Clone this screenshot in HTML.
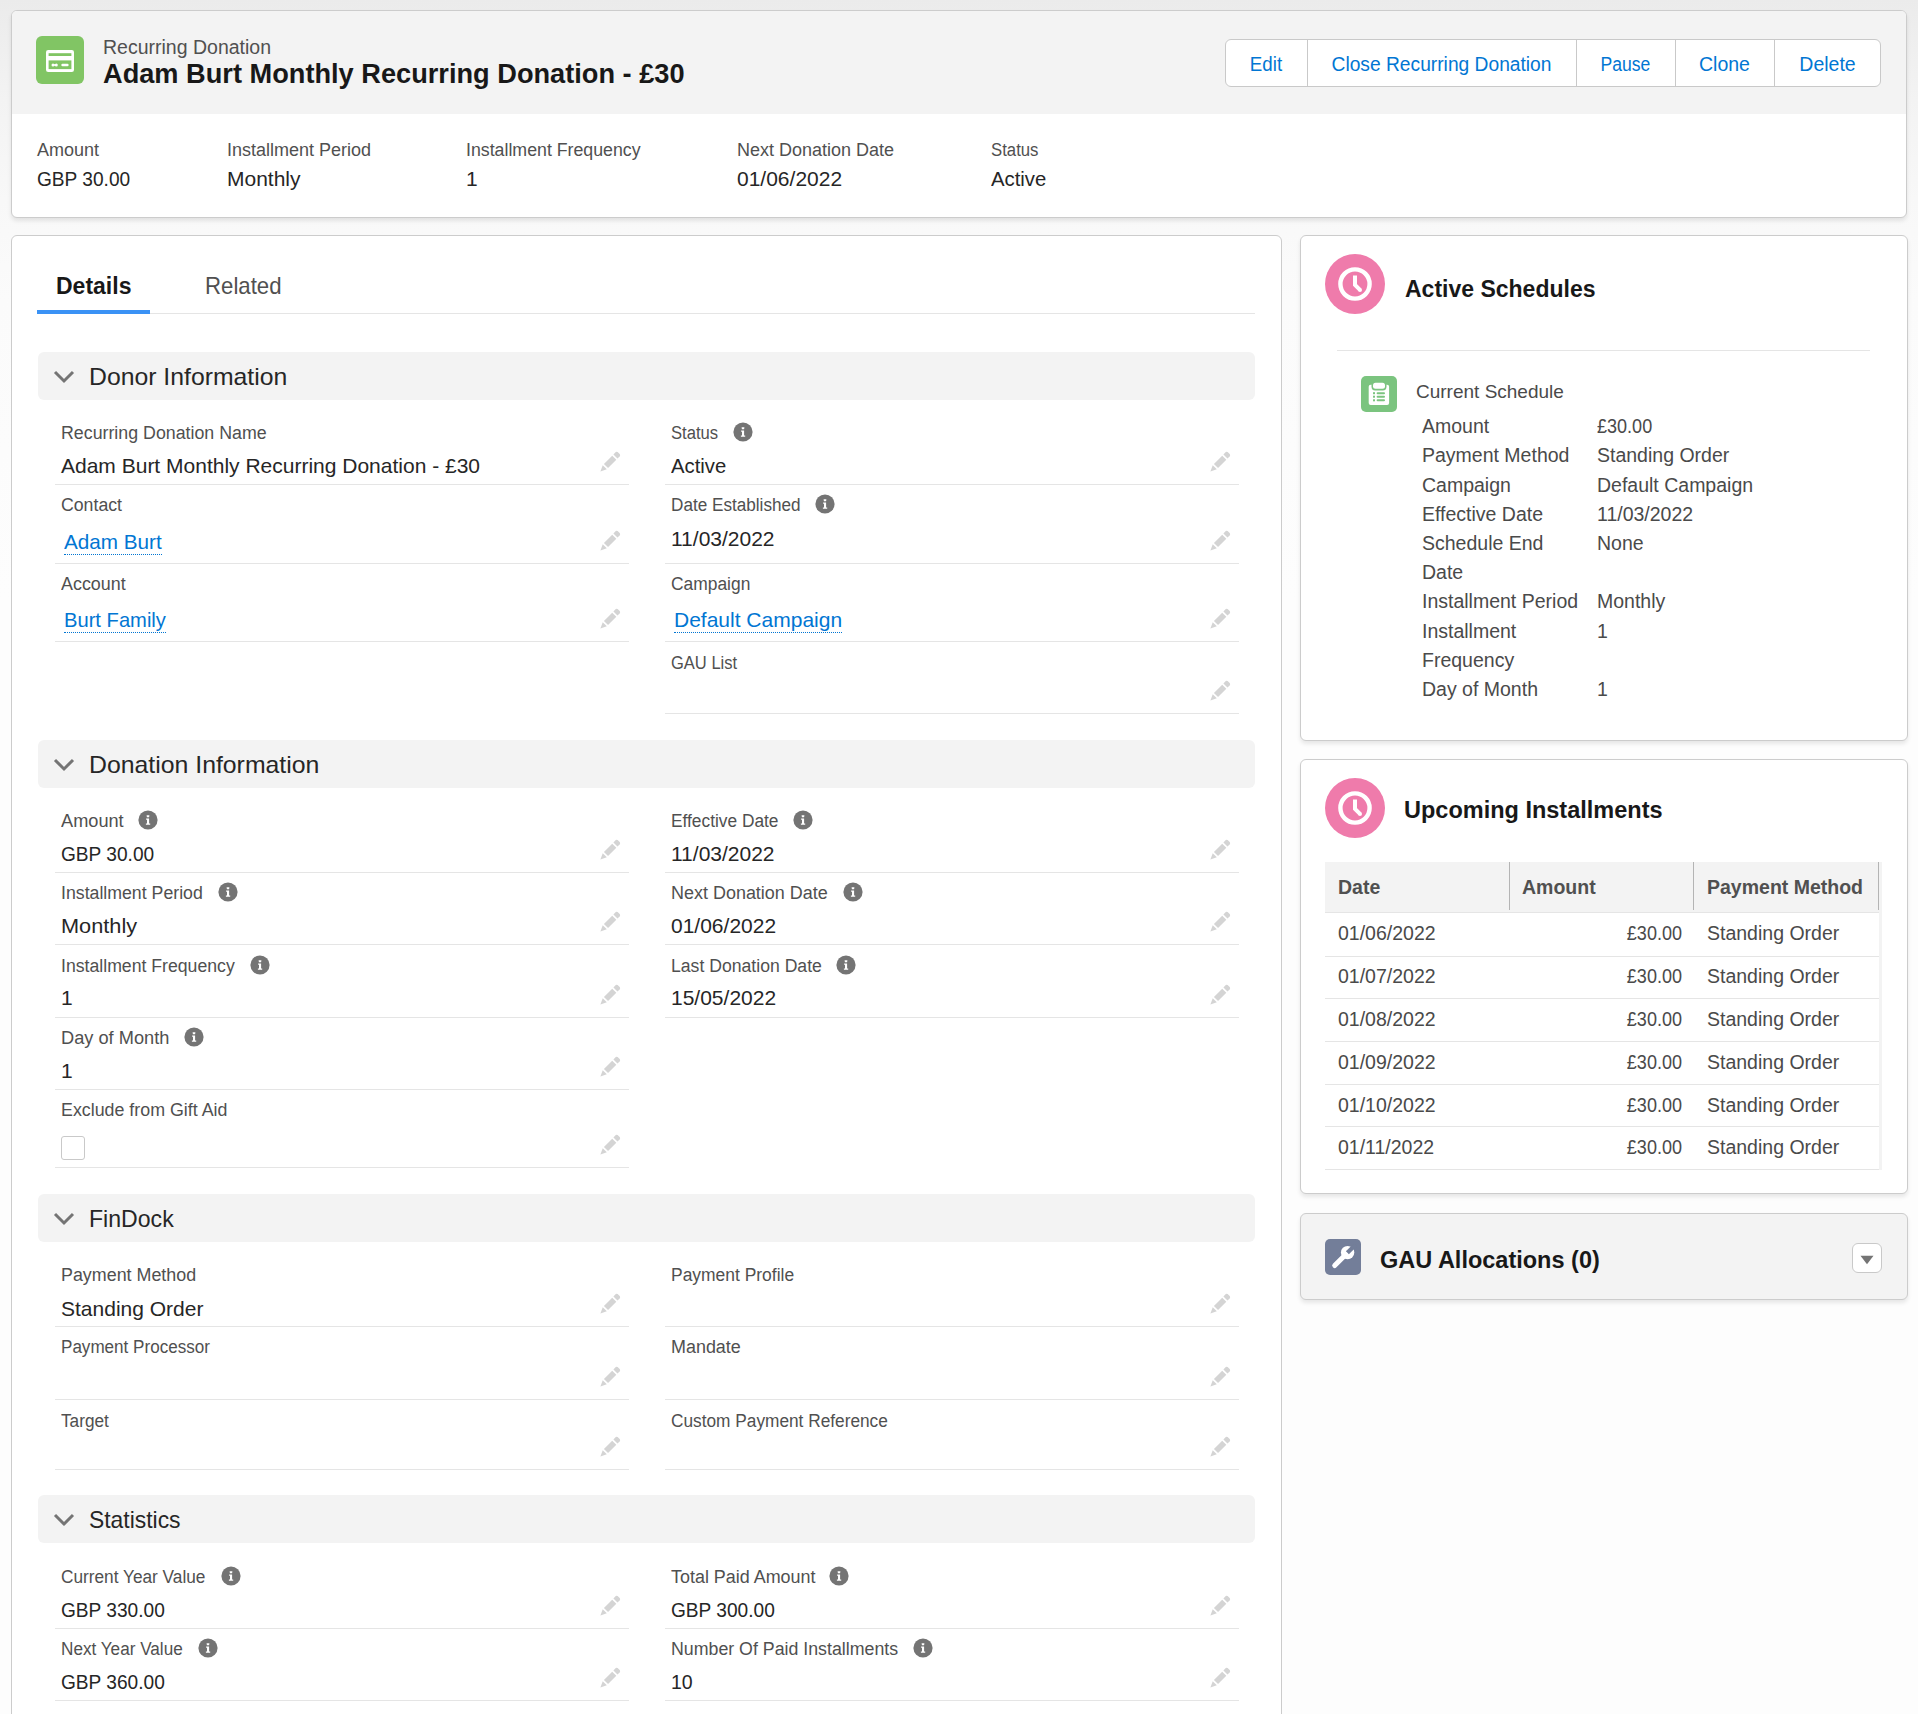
<!DOCTYPE html>
<html><head><meta charset="utf-8"><title>Recurring Donation</title>
<style>
html,body{margin:0;padding:0;width:1918px;height:1714px;overflow:hidden;background:#fafafa}
body{position:relative;font-family:"Liberation Sans", sans-serif}
.t{position:absolute;white-space:nowrap;font-family:"Liberation Sans", sans-serif}
.r{position:absolute;display:block}
.lnk{text-decoration:underline dotted;text-decoration-thickness:1.5px;text-underline-offset:5px}
</style></head><body>
<div class="r" style="left:0;top:0;width:1918px;height:1714px;background:linear-gradient(#ebebeb 0px,#f3f3f3 100px,#f8f8f8 200px,#fbfbfb 300px,#fdfdfd 600px,#fdfdfd 1714px)"></div>
<div class="r" style="left:11px;top:10px;width:1896px;height:208px;box-sizing:border-box;border:1px solid #cccccc;border-radius:6px;background:#fff;box-shadow:0 3px 4px rgba(0,0,0,0.09);overflow:hidden"></div>
<div class="r" style="left:12px;top:11px;width:1894px;height:103px;background:#f3f3f3;border-radius:5px 5px 0 0"></div>
<div class="r" style="left:36px;top:36px;width:48px;height:48px;background:#81c564;border-radius:6px"></div>
<svg class="r" style="left:36px;top:36px" width="48" height="48" viewBox="0 0 48 48"><rect x="10" y="14" width="28" height="22" rx="2.2" fill="#fff"/><rect x="12.6" y="17.2" width="22.8" height="2.8" fill="#81c564"/><rect x="12.6" y="24.4" width="22.8" height="8.7" fill="#81c564"/><circle cx="17" cy="29" r="1.5" fill="#fff"/><circle cx="20.3" cy="29" r="1.5" fill="#fff"/><rect x="17" y="28.2" width="3.3" height="1.6" fill="#fff"/><rect x="25.3" y="27.8" width="7.3" height="2.4" rx="1.2" fill="#fff"/></svg>
<div class="t" style="left:103px;top:38px;font-size:19.5px;line-height:19.5px;color:#505050;">Recurring Donation</div>
<div class="t" style="left:103px;top:61px;font-size:27px;line-height:27px;color:#181818;font-weight:700;transform:scaleX(1.007);transform-origin:0 0;">Adam Burt Monthly Recurring Donation - £30</div>
<div class="r" style="left:1225px;top:39px;width:656px;height:48px;box-sizing:border-box;border:1px solid #c9c9c9;border-radius:6px;background:#fff"></div>
<div class="t" style="left:1225px;width:82px;text-align:center;top:55px;font-size:19.5px;line-height:19.5px;color:#0176d3;transform:scaleX(0.96);transform-origin:50% 0">Edit</div>
<div class="r" style="left:1307px;top:40px;width:1px;height:46px;background:#c9c9c9"></div>
<div class="t" style="left:1307px;width:269px;text-align:center;top:55px;font-size:19.5px;line-height:19.5px;color:#0176d3;transform:scaleX(0.985);transform-origin:50% 0">Close Recurring Donation</div>
<div class="r" style="left:1576px;top:40px;width:1px;height:46px;background:#c9c9c9"></div>
<div class="t" style="left:1576px;width:99px;text-align:center;top:55px;font-size:19.5px;line-height:19.5px;color:#0176d3;transform:scaleX(0.9);transform-origin:50% 0">Pause</div>
<div class="r" style="left:1675px;top:40px;width:1px;height:46px;background:#c9c9c9"></div>
<div class="t" style="left:1675px;width:99px;text-align:center;top:55px;font-size:19.5px;line-height:19.5px;color:#0176d3;transform:scaleX(1);transform-origin:50% 0">Clone</div>
<div class="r" style="left:1774px;top:40px;width:1px;height:46px;background:#c9c9c9"></div>
<div class="t" style="left:1774px;width:107px;text-align:center;top:55px;font-size:19.5px;line-height:19.5px;color:#0176d3;transform:scaleX(1);transform-origin:50% 0">Delete</div>
<div class="t" style="left:37px;top:141px;font-size:18px;line-height:18px;color:#505050;">Amount</div>
<div class="t" style="left:37px;top:168px;font-size:21px;line-height:21px;color:#262626;transform:scaleX(0.91);transform-origin:0 0;">GBP 30.00</div>
<div class="t" style="left:227px;top:141px;font-size:18px;line-height:18px;color:#505050;">Installment Period</div>
<div class="t" style="left:227px;top:168px;font-size:21px;line-height:21px;color:#262626;">Monthly</div>
<div class="t" style="left:466px;top:141px;font-size:18px;line-height:18px;color:#505050;transform:scaleX(0.986);transform-origin:0 0;">Installment Frequency</div>
<div class="t" style="left:466px;top:168px;font-size:21px;line-height:21px;color:#262626;">1</div>
<div class="t" style="left:737px;top:141px;font-size:18px;line-height:18px;color:#505050;">Next Donation Date</div>
<div class="t" style="left:737px;top:168px;font-size:21px;line-height:21px;color:#262626;">01/06/2022</div>
<div class="t" style="left:991px;top:141px;font-size:18px;line-height:18px;color:#505050;transform:scaleX(0.93);transform-origin:0 0;">Status</div>
<div class="t" style="left:991px;top:168px;font-size:21px;line-height:21px;color:#262626;transform:scaleX(0.967);transform-origin:0 0;">Active</div>
<div class="r" style="left:11px;top:235px;width:1271px;height:1600px;box-sizing:border-box;border:1px solid #cccccc;border-radius:6px;background:#fff"></div>
<div class="t" style="left:56px;top:275px;font-size:23px;line-height:23px;color:#181818;font-weight:700;">Details</div>
<div class="t" style="left:205px;top:274px;font-size:24px;line-height:24px;color:#505050;transform:scaleX(0.925);transform-origin:0 0;">Related</div>
<div class="r" style="left:37px;top:313px;width:1218px;height:1px;background:#e5e5e5"></div>
<div class="r" style="left:37px;top:310px;width:113px;height:4px;background:#3a92f5"></div>
<div class="r" style="left:38px;top:352px;width:1217px;height:48px;background:#f3f3f3;border-radius:6px"></div>
<svg class="r" style="left:53px;top:370px" width="22" height="14" viewBox="0 0 22 14"><path d="M2 2l9 9 9-9" fill="none" stroke="#747474" stroke-width="3"/></svg>
<div class="t" style="left:89px;top:365px;font-size:24px;line-height:24px;color:#262626;transform:scaleX(1.032);transform-origin:0 0;">Donor Information</div>
<div class="t" style="left:61px;top:424px;font-size:18px;line-height:18px;color:#505050;transform:scaleX(0.988);transform-origin:0 0">Recurring Donation Name</div>
<div class="t" style="left:61px;top:455px;font-size:21px;line-height:21px;color:#262626;">Adam Burt Monthly Recurring Donation - £30</div>
<div class="r" style="left:55px;top:484px;width:574px;height:1px;background:#e5e5e5"></div>
<svg class="r" style="left:600px;top:451px" width="21" height="21" viewBox="0 0 21 21"><path d="M0.40 20.60L2.73 14.17L6.83 18.27Z M3.94 12.96L12.21 4.69L16.31 8.79L8.04 17.06Z M13.41 3.49L16.03 0.87L17.65 1.08L19.92 3.35L20.13 4.97L17.51 7.59Z" fill="#d4d4d4"/></svg>
<div class="t" style="left:671px;top:424px;font-size:18px;line-height:18px;color:#505050;transform:scaleX(0.924);transform-origin:0 0">Status</div>
<svg class="r" style="left:732.5px;top:422.4px" width="20" height="20" viewBox="0 0 20 20"><circle cx="10" cy="10" r="9.6" fill="#747474"/><path d="M8.6 5.2h2.8l-.3 2h-2.2z" fill="#fff"/><path d="M8.1 8.4h3v5.1h1.1v1.3H7.9v-1.3h1.1v-3.8h-.9z" fill="#fff"/></svg>
<div class="t" style="left:671px;top:455px;font-size:21px;line-height:21px;color:#262626;transform:scaleX(0.965);transform-origin:0 0;">Active</div>
<div class="r" style="left:665px;top:484px;width:574px;height:1px;background:#e5e5e5"></div>
<svg class="r" style="left:1210px;top:451px" width="21" height="21" viewBox="0 0 21 21"><path d="M0.40 20.60L2.73 14.17L6.83 18.27Z M3.94 12.96L12.21 4.69L16.31 8.79L8.04 17.06Z M13.41 3.49L16.03 0.87L17.65 1.08L19.92 3.35L20.13 4.97L17.51 7.59Z" fill="#d4d4d4"/></svg>
<div class="t" style="left:61px;top:496px;font-size:18px;line-height:18px;color:#505050;transform:scaleX(0.983);transform-origin:0 0">Contact</div>
<div class="t" style="left:64px;top:531px;font-size:21px;line-height:21px;color:#0176d3;transform:scaleX(0.985);transform-origin:0 0">Adam Burt</div>
<div class="r" style="left:64px;top:554px;width:98px;height:1px;border-top:1px dotted #0176d3;box-sizing:border-box;height:1px"></div>
<div class="r" style="left:55px;top:563px;width:574px;height:1px;background:#e5e5e5"></div>
<svg class="r" style="left:600px;top:530px" width="21" height="21" viewBox="0 0 21 21"><path d="M0.40 20.60L2.73 14.17L6.83 18.27Z M3.94 12.96L12.21 4.69L16.31 8.79L8.04 17.06Z M13.41 3.49L16.03 0.87L17.65 1.08L19.92 3.35L20.13 4.97L17.51 7.59Z" fill="#d4d4d4"/></svg>
<div class="t" style="left:671px;top:496px;font-size:18px;line-height:18px;color:#505050;transform:scaleX(0.952);transform-origin:0 0">Date Established</div>
<svg class="r" style="left:815.4px;top:494.4px" width="20" height="20" viewBox="0 0 20 20"><circle cx="10" cy="10" r="9.6" fill="#747474"/><path d="M8.6 5.2h2.8l-.3 2h-2.2z" fill="#fff"/><path d="M8.1 8.4h3v5.1h1.1v1.3H7.9v-1.3h1.1v-3.8h-.9z" fill="#fff"/></svg>
<div class="t" style="left:671px;top:528px;font-size:21px;line-height:21px;color:#262626;">11/03/2022</div>
<div class="r" style="left:665px;top:563px;width:574px;height:1px;background:#e5e5e5"></div>
<svg class="r" style="left:1210px;top:530px" width="21" height="21" viewBox="0 0 21 21"><path d="M0.40 20.60L2.73 14.17L6.83 18.27Z M3.94 12.96L12.21 4.69L16.31 8.79L8.04 17.06Z M13.41 3.49L16.03 0.87L17.65 1.08L19.92 3.35L20.13 4.97L17.51 7.59Z" fill="#d4d4d4"/></svg>
<div class="t" style="left:61px;top:575px;font-size:18px;line-height:18px;color:#505050;transform:scaleX(0.994);transform-origin:0 0">Account</div>
<div class="t" style="left:64px;top:609px;font-size:21px;line-height:21px;color:#0176d3;transform:scaleX(0.96);transform-origin:0 0">Burt Family</div>
<div class="r" style="left:64px;top:632px;width:102px;height:1px;border-top:1px dotted #0176d3;box-sizing:border-box;height:1px"></div>
<div class="r" style="left:55px;top:641px;width:574px;height:1px;background:#e5e5e5"></div>
<svg class="r" style="left:600px;top:608px" width="21" height="21" viewBox="0 0 21 21"><path d="M0.40 20.60L2.73 14.17L6.83 18.27Z M3.94 12.96L12.21 4.69L16.31 8.79L8.04 17.06Z M13.41 3.49L16.03 0.87L17.65 1.08L19.92 3.35L20.13 4.97L17.51 7.59Z" fill="#d4d4d4"/></svg>
<div class="t" style="left:671px;top:575px;font-size:18px;line-height:18px;color:#505050;transform:scaleX(0.967);transform-origin:0 0">Campaign</div>
<div class="t" style="left:674px;top:609px;font-size:21px;line-height:21px;color:#0176d3;transform:scaleX(1);transform-origin:0 0">Default Campaign</div>
<div class="r" style="left:674px;top:632px;width:168px;height:1px;border-top:1px dotted #0176d3;box-sizing:border-box;height:1px"></div>
<div class="r" style="left:665px;top:641px;width:574px;height:1px;background:#e5e5e5"></div>
<svg class="r" style="left:1210px;top:608px" width="21" height="21" viewBox="0 0 21 21"><path d="M0.40 20.60L2.73 14.17L6.83 18.27Z M3.94 12.96L12.21 4.69L16.31 8.79L8.04 17.06Z M13.41 3.49L16.03 0.87L17.65 1.08L19.92 3.35L20.13 4.97L17.51 7.59Z" fill="#d4d4d4"/></svg>
<div class="t" style="left:671px;top:654px;font-size:18px;line-height:18px;color:#505050;transform:scaleX(0.918);transform-origin:0 0">GAU List</div>
<div class="r" style="left:665px;top:713px;width:574px;height:1px;background:#e5e5e5"></div>
<svg class="r" style="left:1210px;top:680px" width="21" height="21" viewBox="0 0 21 21"><path d="M0.40 20.60L2.73 14.17L6.83 18.27Z M3.94 12.96L12.21 4.69L16.31 8.79L8.04 17.06Z M13.41 3.49L16.03 0.87L17.65 1.08L19.92 3.35L20.13 4.97L17.51 7.59Z" fill="#d4d4d4"/></svg>
<div class="r" style="left:38px;top:740px;width:1217px;height:48px;background:#f3f3f3;border-radius:6px"></div>
<svg class="r" style="left:53px;top:758px" width="22" height="14" viewBox="0 0 22 14"><path d="M2 2l9 9 9-9" fill="none" stroke="#747474" stroke-width="3"/></svg>
<div class="t" style="left:89px;top:753px;font-size:24px;line-height:24px;color:#262626;transform:scaleX(1.034);transform-origin:0 0;">Donation Information</div>
<div class="t" style="left:61px;top:812px;font-size:18px;line-height:18px;color:#505050;transform:scaleX(1.01);transform-origin:0 0">Amount</div>
<svg class="r" style="left:138.3px;top:810.4px" width="20" height="20" viewBox="0 0 20 20"><circle cx="10" cy="10" r="9.6" fill="#747474"/><path d="M8.6 5.2h2.8l-.3 2h-2.2z" fill="#fff"/><path d="M8.1 8.4h3v5.1h1.1v1.3H7.9v-1.3h1.1v-3.8h-.9z" fill="#fff"/></svg>
<div class="t" style="left:61px;top:843px;font-size:21px;line-height:21px;color:#262626;transform:scaleX(0.91);transform-origin:0 0;">GBP 30.00</div>
<div class="r" style="left:55px;top:872px;width:574px;height:1px;background:#e5e5e5"></div>
<svg class="r" style="left:600px;top:839px" width="21" height="21" viewBox="0 0 21 21"><path d="M0.40 20.60L2.73 14.17L6.83 18.27Z M3.94 12.96L12.21 4.69L16.31 8.79L8.04 17.06Z M13.41 3.49L16.03 0.87L17.65 1.08L19.92 3.35L20.13 4.97L17.51 7.59Z" fill="#d4d4d4"/></svg>
<div class="t" style="left:671px;top:812px;font-size:18px;line-height:18px;color:#505050;transform:scaleX(0.962);transform-origin:0 0">Effective Date</div>
<svg class="r" style="left:793.4px;top:810.4px" width="20" height="20" viewBox="0 0 20 20"><circle cx="10" cy="10" r="9.6" fill="#747474"/><path d="M8.6 5.2h2.8l-.3 2h-2.2z" fill="#fff"/><path d="M8.1 8.4h3v5.1h1.1v1.3H7.9v-1.3h1.1v-3.8h-.9z" fill="#fff"/></svg>
<div class="t" style="left:671px;top:843px;font-size:21px;line-height:21px;color:#262626;">11/03/2022</div>
<div class="r" style="left:665px;top:872px;width:574px;height:1px;background:#e5e5e5"></div>
<svg class="r" style="left:1210px;top:839px" width="21" height="21" viewBox="0 0 21 21"><path d="M0.40 20.60L2.73 14.17L6.83 18.27Z M3.94 12.96L12.21 4.69L16.31 8.79L8.04 17.06Z M13.41 3.49L16.03 0.87L17.65 1.08L19.92 3.35L20.13 4.97L17.51 7.59Z" fill="#d4d4d4"/></svg>
<div class="t" style="left:61px;top:884px;font-size:18px;line-height:18px;color:#505050;transform:scaleX(0.984);transform-origin:0 0">Installment Period</div>
<svg class="r" style="left:217.5px;top:882.4px" width="20" height="20" viewBox="0 0 20 20"><circle cx="10" cy="10" r="9.6" fill="#747474"/><path d="M8.6 5.2h2.8l-.3 2h-2.2z" fill="#fff"/><path d="M8.1 8.4h3v5.1h1.1v1.3H7.9v-1.3h1.1v-3.8h-.9z" fill="#fff"/></svg>
<div class="t" style="left:61px;top:915px;font-size:21px;line-height:21px;color:#262626;transform:scaleX(1.035);transform-origin:0 0;">Monthly</div>
<div class="r" style="left:55px;top:944px;width:574px;height:1px;background:#e5e5e5"></div>
<svg class="r" style="left:600px;top:911px" width="21" height="21" viewBox="0 0 21 21"><path d="M0.40 20.60L2.73 14.17L6.83 18.27Z M3.94 12.96L12.21 4.69L16.31 8.79L8.04 17.06Z M13.41 3.49L16.03 0.87L17.65 1.08L19.92 3.35L20.13 4.97L17.51 7.59Z" fill="#d4d4d4"/></svg>
<div class="t" style="left:671px;top:884px;font-size:18px;line-height:18px;color:#505050;transform:scaleX(0.998);transform-origin:0 0">Next Donation Date</div>
<svg class="r" style="left:842.5px;top:882.4px" width="20" height="20" viewBox="0 0 20 20"><circle cx="10" cy="10" r="9.6" fill="#747474"/><path d="M8.6 5.2h2.8l-.3 2h-2.2z" fill="#fff"/><path d="M8.1 8.4h3v5.1h1.1v1.3H7.9v-1.3h1.1v-3.8h-.9z" fill="#fff"/></svg>
<div class="t" style="left:671px;top:915px;font-size:21px;line-height:21px;color:#262626;">01/06/2022</div>
<div class="r" style="left:665px;top:944px;width:574px;height:1px;background:#e5e5e5"></div>
<svg class="r" style="left:1210px;top:911px" width="21" height="21" viewBox="0 0 21 21"><path d="M0.40 20.60L2.73 14.17L6.83 18.27Z M3.94 12.96L12.21 4.69L16.31 8.79L8.04 17.06Z M13.41 3.49L16.03 0.87L17.65 1.08L19.92 3.35L20.13 4.97L17.51 7.59Z" fill="#d4d4d4"/></svg>
<div class="t" style="left:61px;top:957px;font-size:18px;line-height:18px;color:#505050;transform:scaleX(0.981);transform-origin:0 0">Installment Frequency</div>
<svg class="r" style="left:249.5px;top:955.4px" width="20" height="20" viewBox="0 0 20 20"><circle cx="10" cy="10" r="9.6" fill="#747474"/><path d="M8.6 5.2h2.8l-.3 2h-2.2z" fill="#fff"/><path d="M8.1 8.4h3v5.1h1.1v1.3H7.9v-1.3h1.1v-3.8h-.9z" fill="#fff"/></svg>
<div class="t" style="left:61px;top:987px;font-size:21px;line-height:21px;color:#262626;">1</div>
<div class="r" style="left:55px;top:1017px;width:574px;height:1px;background:#e5e5e5"></div>
<svg class="r" style="left:600px;top:984px" width="21" height="21" viewBox="0 0 21 21"><path d="M0.40 20.60L2.73 14.17L6.83 18.27Z M3.94 12.96L12.21 4.69L16.31 8.79L8.04 17.06Z M13.41 3.49L16.03 0.87L17.65 1.08L19.92 3.35L20.13 4.97L17.51 7.59Z" fill="#d4d4d4"/></svg>
<div class="t" style="left:671px;top:957px;font-size:18px;line-height:18px;color:#505050;transform:scaleX(0.979);transform-origin:0 0">Last Donation Date</div>
<svg class="r" style="left:836.4px;top:955.4px" width="20" height="20" viewBox="0 0 20 20"><circle cx="10" cy="10" r="9.6" fill="#747474"/><path d="M8.6 5.2h2.8l-.3 2h-2.2z" fill="#fff"/><path d="M8.1 8.4h3v5.1h1.1v1.3H7.9v-1.3h1.1v-3.8h-.9z" fill="#fff"/></svg>
<div class="t" style="left:671px;top:987px;font-size:21px;line-height:21px;color:#262626;">15/05/2022</div>
<div class="r" style="left:665px;top:1017px;width:574px;height:1px;background:#e5e5e5"></div>
<svg class="r" style="left:1210px;top:984px" width="21" height="21" viewBox="0 0 21 21"><path d="M0.40 20.60L2.73 14.17L6.83 18.27Z M3.94 12.96L12.21 4.69L16.31 8.79L8.04 17.06Z M13.41 3.49L16.03 0.87L17.65 1.08L19.92 3.35L20.13 4.97L17.51 7.59Z" fill="#d4d4d4"/></svg>
<div class="t" style="left:61px;top:1029px;font-size:18px;line-height:18px;color:#505050;transform:scaleX(1.012);transform-origin:0 0">Day of Month</div>
<svg class="r" style="left:184.4px;top:1027.4px" width="20" height="20" viewBox="0 0 20 20"><circle cx="10" cy="10" r="9.6" fill="#747474"/><path d="M8.6 5.2h2.8l-.3 2h-2.2z" fill="#fff"/><path d="M8.1 8.4h3v5.1h1.1v1.3H7.9v-1.3h1.1v-3.8h-.9z" fill="#fff"/></svg>
<div class="t" style="left:61px;top:1060px;font-size:21px;line-height:21px;color:#262626;">1</div>
<div class="r" style="left:55px;top:1089px;width:574px;height:1px;background:#e5e5e5"></div>
<svg class="r" style="left:600px;top:1056px" width="21" height="21" viewBox="0 0 21 21"><path d="M0.40 20.60L2.73 14.17L6.83 18.27Z M3.94 12.96L12.21 4.69L16.31 8.79L8.04 17.06Z M13.41 3.49L16.03 0.87L17.65 1.08L19.92 3.35L20.13 4.97L17.51 7.59Z" fill="#d4d4d4"/></svg>
<div class="t" style="left:61px;top:1101px;font-size:18px;line-height:18px;color:#505050;transform:scaleX(0.99);transform-origin:0 0">Exclude from Gift Aid</div>
<div class="r" style="left:61px;top:1136px;width:24px;height:24px;box-sizing:border-box;border:1px solid #c9c9c9;border-radius:3px;background:#fff"></div>
<div class="r" style="left:55px;top:1167px;width:574px;height:1px;background:#e5e5e5"></div>
<svg class="r" style="left:600px;top:1134px" width="21" height="21" viewBox="0 0 21 21"><path d="M0.40 20.60L2.73 14.17L6.83 18.27Z M3.94 12.96L12.21 4.69L16.31 8.79L8.04 17.06Z M13.41 3.49L16.03 0.87L17.65 1.08L19.92 3.35L20.13 4.97L17.51 7.59Z" fill="#d4d4d4"/></svg>
<div class="r" style="left:38px;top:1194px;width:1217px;height:48px;background:#f3f3f3;border-radius:6px"></div>
<svg class="r" style="left:53px;top:1212px" width="22" height="14" viewBox="0 0 22 14"><path d="M2 2l9 9 9-9" fill="none" stroke="#747474" stroke-width="3"/></svg>
<div class="t" style="left:89px;top:1207px;font-size:24px;line-height:24px;color:#262626;transform:scaleX(0.962);transform-origin:0 0;">FinDock</div>
<div class="t" style="left:61px;top:1266px;font-size:18px;line-height:18px;color:#505050;transform:scaleX(0.993);transform-origin:0 0">Payment Method</div>
<div class="t" style="left:61px;top:1298px;font-size:21px;line-height:21px;color:#262626;">Standing Order</div>
<div class="r" style="left:55px;top:1326px;width:574px;height:1px;background:#e5e5e5"></div>
<svg class="r" style="left:600px;top:1293px" width="21" height="21" viewBox="0 0 21 21"><path d="M0.40 20.60L2.73 14.17L6.83 18.27Z M3.94 12.96L12.21 4.69L16.31 8.79L8.04 17.06Z M13.41 3.49L16.03 0.87L17.65 1.08L19.92 3.35L20.13 4.97L17.51 7.59Z" fill="#d4d4d4"/></svg>
<div class="t" style="left:671px;top:1266px;font-size:18px;line-height:18px;color:#505050;transform:scaleX(0.969);transform-origin:0 0">Payment Profile</div>
<div class="r" style="left:665px;top:1326px;width:574px;height:1px;background:#e5e5e5"></div>
<svg class="r" style="left:1210px;top:1293px" width="21" height="21" viewBox="0 0 21 21"><path d="M0.40 20.60L2.73 14.17L6.83 18.27Z M3.94 12.96L12.21 4.69L16.31 8.79L8.04 17.06Z M13.41 3.49L16.03 0.87L17.65 1.08L19.92 3.35L20.13 4.97L17.51 7.59Z" fill="#d4d4d4"/></svg>
<div class="t" style="left:61px;top:1338px;font-size:18px;line-height:18px;color:#505050;transform:scaleX(0.948);transform-origin:0 0">Payment Processor</div>
<div class="r" style="left:55px;top:1399px;width:574px;height:1px;background:#e5e5e5"></div>
<svg class="r" style="left:600px;top:1366px" width="21" height="21" viewBox="0 0 21 21"><path d="M0.40 20.60L2.73 14.17L6.83 18.27Z M3.94 12.96L12.21 4.69L16.31 8.79L8.04 17.06Z M13.41 3.49L16.03 0.87L17.65 1.08L19.92 3.35L20.13 4.97L17.51 7.59Z" fill="#d4d4d4"/></svg>
<div class="t" style="left:671px;top:1338px;font-size:18px;line-height:18px;color:#505050;transform:scaleX(0.996);transform-origin:0 0">Mandate</div>
<div class="r" style="left:665px;top:1399px;width:574px;height:1px;background:#e5e5e5"></div>
<svg class="r" style="left:1210px;top:1366px" width="21" height="21" viewBox="0 0 21 21"><path d="M0.40 20.60L2.73 14.17L6.83 18.27Z M3.94 12.96L12.21 4.69L16.31 8.79L8.04 17.06Z M13.41 3.49L16.03 0.87L17.65 1.08L19.92 3.35L20.13 4.97L17.51 7.59Z" fill="#d4d4d4"/></svg>
<div class="t" style="left:61px;top:1412px;font-size:18px;line-height:18px;color:#505050;transform:scaleX(0.956);transform-origin:0 0">Target</div>
<div class="r" style="left:55px;top:1469px;width:574px;height:1px;background:#e5e5e5"></div>
<svg class="r" style="left:600px;top:1436px" width="21" height="21" viewBox="0 0 21 21"><path d="M0.40 20.60L2.73 14.17L6.83 18.27Z M3.94 12.96L12.21 4.69L16.31 8.79L8.04 17.06Z M13.41 3.49L16.03 0.87L17.65 1.08L19.92 3.35L20.13 4.97L17.51 7.59Z" fill="#d4d4d4"/></svg>
<div class="t" style="left:671px;top:1412px;font-size:18px;line-height:18px;color:#505050;transform:scaleX(0.959);transform-origin:0 0">Custom Payment Reference</div>
<div class="r" style="left:665px;top:1469px;width:574px;height:1px;background:#e5e5e5"></div>
<svg class="r" style="left:1210px;top:1436px" width="21" height="21" viewBox="0 0 21 21"><path d="M0.40 20.60L2.73 14.17L6.83 18.27Z M3.94 12.96L12.21 4.69L16.31 8.79L8.04 17.06Z M13.41 3.49L16.03 0.87L17.65 1.08L19.92 3.35L20.13 4.97L17.51 7.59Z" fill="#d4d4d4"/></svg>
<div class="r" style="left:38px;top:1495px;width:1217px;height:48px;background:#f3f3f3;border-radius:6px"></div>
<svg class="r" style="left:53px;top:1513px" width="22" height="14" viewBox="0 0 22 14"><path d="M2 2l9 9 9-9" fill="none" stroke="#747474" stroke-width="3"/></svg>
<div class="t" style="left:89px;top:1508px;font-size:24px;line-height:24px;color:#262626;transform:scaleX(0.953);transform-origin:0 0;">Statistics</div>
<div class="t" style="left:61px;top:1568px;font-size:18px;line-height:18px;color:#505050;transform:scaleX(0.958);transform-origin:0 0">Current Year Value</div>
<svg class="r" style="left:220.6px;top:1566.4px" width="20" height="20" viewBox="0 0 20 20"><circle cx="10" cy="10" r="9.6" fill="#747474"/><path d="M8.6 5.2h2.8l-.3 2h-2.2z" fill="#fff"/><path d="M8.1 8.4h3v5.1h1.1v1.3H7.9v-1.3h1.1v-3.8h-.9z" fill="#fff"/></svg>
<div class="t" style="left:61px;top:1599px;font-size:21px;line-height:21px;color:#262626;transform:scaleX(0.91);transform-origin:0 0;">GBP 330.00</div>
<div class="r" style="left:55px;top:1628px;width:574px;height:1px;background:#e5e5e5"></div>
<svg class="r" style="left:600px;top:1595px" width="21" height="21" viewBox="0 0 21 21"><path d="M0.40 20.60L2.73 14.17L6.83 18.27Z M3.94 12.96L12.21 4.69L16.31 8.79L8.04 17.06Z M13.41 3.49L16.03 0.87L17.65 1.08L19.92 3.35L20.13 4.97L17.51 7.59Z" fill="#d4d4d4"/></svg>
<div class="t" style="left:671px;top:1568px;font-size:18px;line-height:18px;color:#505050;transform:scaleX(0.996);transform-origin:0 0">Total Paid Amount</div>
<svg class="r" style="left:829.4px;top:1566.4px" width="20" height="20" viewBox="0 0 20 20"><circle cx="10" cy="10" r="9.6" fill="#747474"/><path d="M8.6 5.2h2.8l-.3 2h-2.2z" fill="#fff"/><path d="M8.1 8.4h3v5.1h1.1v1.3H7.9v-1.3h1.1v-3.8h-.9z" fill="#fff"/></svg>
<div class="t" style="left:671px;top:1599px;font-size:21px;line-height:21px;color:#262626;transform:scaleX(0.91);transform-origin:0 0;">GBP 300.00</div>
<div class="r" style="left:665px;top:1628px;width:574px;height:1px;background:#e5e5e5"></div>
<svg class="r" style="left:1210px;top:1595px" width="21" height="21" viewBox="0 0 21 21"><path d="M0.40 20.60L2.73 14.17L6.83 18.27Z M3.94 12.96L12.21 4.69L16.31 8.79L8.04 17.06Z M13.41 3.49L16.03 0.87L17.65 1.08L19.92 3.35L20.13 4.97L17.51 7.59Z" fill="#d4d4d4"/></svg>
<div class="t" style="left:61px;top:1640px;font-size:18px;line-height:18px;color:#505050;transform:scaleX(0.953);transform-origin:0 0">Next Year Value</div>
<svg class="r" style="left:197.5px;top:1638.4px" width="20" height="20" viewBox="0 0 20 20"><circle cx="10" cy="10" r="9.6" fill="#747474"/><path d="M8.6 5.2h2.8l-.3 2h-2.2z" fill="#fff"/><path d="M8.1 8.4h3v5.1h1.1v1.3H7.9v-1.3h1.1v-3.8h-.9z" fill="#fff"/></svg>
<div class="t" style="left:61px;top:1671px;font-size:21px;line-height:21px;color:#262626;transform:scaleX(0.91);transform-origin:0 0;">GBP 360.00</div>
<div class="r" style="left:55px;top:1700px;width:574px;height:1px;background:#e5e5e5"></div>
<svg class="r" style="left:600px;top:1667px" width="21" height="21" viewBox="0 0 21 21"><path d="M0.40 20.60L2.73 14.17L6.83 18.27Z M3.94 12.96L12.21 4.69L16.31 8.79L8.04 17.06Z M13.41 3.49L16.03 0.87L17.65 1.08L19.92 3.35L20.13 4.97L17.51 7.59Z" fill="#d4d4d4"/></svg>
<div class="t" style="left:671px;top:1640px;font-size:18px;line-height:18px;color:#505050;transform:scaleX(0.987);transform-origin:0 0">Number Of Paid Installments</div>
<svg class="r" style="left:912.5px;top:1638.4px" width="20" height="20" viewBox="0 0 20 20"><circle cx="10" cy="10" r="9.6" fill="#747474"/><path d="M8.6 5.2h2.8l-.3 2h-2.2z" fill="#fff"/><path d="M8.1 8.4h3v5.1h1.1v1.3H7.9v-1.3h1.1v-3.8h-.9z" fill="#fff"/></svg>
<div class="t" style="left:671px;top:1671px;font-size:21px;line-height:21px;color:#262626;transform:scaleX(0.93);transform-origin:0 0;">10</div>
<div class="r" style="left:665px;top:1700px;width:574px;height:1px;background:#e5e5e5"></div>
<svg class="r" style="left:1210px;top:1667px" width="21" height="21" viewBox="0 0 21 21"><path d="M0.40 20.60L2.73 14.17L6.83 18.27Z M3.94 12.96L12.21 4.69L16.31 8.79L8.04 17.06Z M13.41 3.49L16.03 0.87L17.65 1.08L19.92 3.35L20.13 4.97L17.51 7.59Z" fill="#d4d4d4"/></svg>
<div class="r" style="left:1300px;top:235px;width:608px;height:506px;box-sizing:border-box;border:1px solid #cccccc;border-radius:6px;background:#fff;box-shadow:0 3px 4px rgba(0,0,0,0.09)"></div>
<svg class="r" style="left:1325px;top:254px" width="60" height="60" viewBox="0 0 60 60"><circle cx="30" cy="30" r="30" fill="#ef7bab"/><circle cx="30" cy="30" r="14.6" fill="none" stroke="#fff" stroke-width="4.4"/><path d="M30 21.6v9.3l5 5" fill="none" stroke="#fff" stroke-width="4" stroke-linecap="butt" stroke-linejoin="miter"/><circle cx="35" cy="35.9" r="2" fill="#fff"/></svg>
<div class="t" style="left:1405px;top:278px;font-size:23px;line-height:23px;color:#181818;font-weight:700;">Active Schedules</div>
<div class="r" style="left:1337px;top:350px;width:533px;height:1px;background:#e5e5e5"></div>
<div class="r" style="left:1361px;top:376px;width:36px;height:36px;background:#7bc47f;border-radius:5px"></div>
<svg class="r" style="left:1361px;top:376px" width="36" height="36" viewBox="0 0 36 36"><rect x="7.7" y="8.8" width="20.4" height="20.2" rx="2" fill="#fff"/><rect x="10.5" y="5.8" width="15" height="8.6" rx="3.6" fill="#7bc47f"/><rect x="12" y="6.8" width="12" height="6" rx="2.5" fill="#fff"/><rect x="12" y="16.2" width="2" height="2" fill="#7bc47f"/><rect x="15.6" y="16.2" width="8.4" height="2" rx="1" fill="#7bc47f"/><rect x="12" y="19.7" width="2" height="2" fill="#7bc47f"/><rect x="15.6" y="19.7" width="8.4" height="2" rx="1" fill="#7bc47f"/><rect x="12" y="23.3" width="2" height="2" fill="#7bc47f"/><rect x="15.6" y="23.3" width="8.4" height="2" rx="1" fill="#7bc47f"/></svg>
<div class="t" style="left:1416px;top:382px;font-size:19px;line-height:19px;color:#4a4a4a;">Current Schedule</div>
<div class="t" style="left:1422px;top:417px;font-size:19.5px;line-height:19.5px;color:#4a4a4a;">Amount</div>
<div class="t" style="left:1597px;top:417px;font-size:19.5px;line-height:19.5px;color:#4a4a4a;transform:scaleX(0.925);transform-origin:0 0;">£30.00</div>
<div class="t" style="left:1422px;top:446px;font-size:19.5px;line-height:19.5px;color:#4a4a4a;">Payment Method</div>
<div class="t" style="left:1597px;top:446px;font-size:19.5px;line-height:19.5px;color:#4a4a4a;">Standing Order</div>
<div class="t" style="left:1422px;top:476px;font-size:19.5px;line-height:19.5px;color:#4a4a4a;">Campaign</div>
<div class="t" style="left:1597px;top:476px;font-size:19.5px;line-height:19.5px;color:#4a4a4a;">Default Campaign</div>
<div class="t" style="left:1422px;top:505px;font-size:19.5px;line-height:19.5px;color:#4a4a4a;">Effective Date</div>
<div class="t" style="left:1597px;top:505px;font-size:19.5px;line-height:19.5px;color:#4a4a4a;">11/03/2022</div>
<div class="t" style="left:1422px;top:534px;font-size:19.5px;line-height:19.5px;color:#4a4a4a;">Schedule End</div>
<div class="t" style="left:1597px;top:534px;font-size:19.5px;line-height:19.5px;color:#4a4a4a;">None</div>
<div class="t" style="left:1422px;top:563px;font-size:19.5px;line-height:19.5px;color:#4a4a4a;">Date</div>
<div class="t" style="left:1422px;top:592px;font-size:19.5px;line-height:19.5px;color:#4a4a4a;">Installment Period</div>
<div class="t" style="left:1597px;top:592px;font-size:19.5px;line-height:19.5px;color:#4a4a4a;">Monthly</div>
<div class="t" style="left:1422px;top:622px;font-size:19.5px;line-height:19.5px;color:#4a4a4a;">Installment</div>
<div class="t" style="left:1597px;top:622px;font-size:19.5px;line-height:19.5px;color:#4a4a4a;">1</div>
<div class="t" style="left:1422px;top:651px;font-size:19.5px;line-height:19.5px;color:#4a4a4a;">Frequency</div>
<div class="t" style="left:1422px;top:680px;font-size:19.5px;line-height:19.5px;color:#4a4a4a;">Day of Month</div>
<div class="t" style="left:1597px;top:680px;font-size:19.5px;line-height:19.5px;color:#4a4a4a;">1</div>
<div class="r" style="left:1300px;top:759px;width:608px;height:435px;box-sizing:border-box;border:1px solid #cccccc;border-radius:6px;background:#fff;box-shadow:0 3px 4px rgba(0,0,0,0.09)"></div>
<svg class="r" style="left:1325px;top:778px" width="60" height="60" viewBox="0 0 60 60"><circle cx="30" cy="30" r="30" fill="#ef7bab"/><circle cx="30" cy="30" r="14.6" fill="none" stroke="#fff" stroke-width="4.4"/><path d="M30 21.6v9.3l5 5" fill="none" stroke="#fff" stroke-width="4" stroke-linecap="butt" stroke-linejoin="miter"/><circle cx="35" cy="35.9" r="2" fill="#fff"/></svg>
<div class="t" style="left:1404px;top:799px;font-size:23.5px;line-height:23.5px;color:#181818;font-weight:700;">Upcoming Installments</div>
<div class="r" style="left:1325px;top:862px;width:554px;height:50px;background:#f3f3f3"></div>
<div class="r" style="left:1325px;top:912px;width:554px;height:1px;background:#e5e5e5"></div>
<div class="r" style="left:1509px;top:862px;width:1px;height:48px;background:#b4b4b4"></div>
<div class="r" style="left:1693px;top:862px;width:1px;height:48px;background:#b4b4b4"></div>
<div class="r" style="left:1878px;top:862px;width:1px;height:48px;background:#b4b4b4"></div>
<div class="r" style="left:1879px;top:862px;width:3px;height:308px;background:#f3f3f3"></div>
<div class="t" style="left:1338px;top:878px;font-size:19.5px;line-height:19.5px;color:#505050;font-weight:700;">Date</div>
<div class="t" style="left:1522px;top:878px;font-size:19.5px;line-height:19.5px;color:#505050;font-weight:700;">Amount</div>
<div class="t" style="left:1707px;top:878px;font-size:19.5px;line-height:19.5px;color:#505050;font-weight:700;">Payment Method</div>
<div class="t" style="left:1338px;top:924px;font-size:19.5px;line-height:19.5px;color:#4a4a4a;">01/06/2022</div>
<div class="t" style="left:1500px;width:182px;text-align:right;top:924px;font-size:19.5px;line-height:19.5px;color:#4a4a4a;transform:scaleX(0.925);transform-origin:100% 0">£30.00</div>
<div class="t" style="left:1707px;top:924px;font-size:19.5px;line-height:19.5px;color:#4a4a4a;">Standing Order</div>
<div class="r" style="left:1325px;top:956px;width:554px;height:1px;background:#e5e5e5"></div>
<div class="t" style="left:1338px;top:967px;font-size:19.5px;line-height:19.5px;color:#4a4a4a;">01/07/2022</div>
<div class="t" style="left:1500px;width:182px;text-align:right;top:967px;font-size:19.5px;line-height:19.5px;color:#4a4a4a;transform:scaleX(0.925);transform-origin:100% 0">£30.00</div>
<div class="t" style="left:1707px;top:967px;font-size:19.5px;line-height:19.5px;color:#4a4a4a;">Standing Order</div>
<div class="r" style="left:1325px;top:998px;width:554px;height:1px;background:#e5e5e5"></div>
<div class="t" style="left:1338px;top:1010px;font-size:19.5px;line-height:19.5px;color:#4a4a4a;">01/08/2022</div>
<div class="t" style="left:1500px;width:182px;text-align:right;top:1010px;font-size:19.5px;line-height:19.5px;color:#4a4a4a;transform:scaleX(0.925);transform-origin:100% 0">£30.00</div>
<div class="t" style="left:1707px;top:1010px;font-size:19.5px;line-height:19.5px;color:#4a4a4a;">Standing Order</div>
<div class="r" style="left:1325px;top:1041px;width:554px;height:1px;background:#e5e5e5"></div>
<div class="t" style="left:1338px;top:1053px;font-size:19.5px;line-height:19.5px;color:#4a4a4a;">01/09/2022</div>
<div class="t" style="left:1500px;width:182px;text-align:right;top:1053px;font-size:19.5px;line-height:19.5px;color:#4a4a4a;transform:scaleX(0.925);transform-origin:100% 0">£30.00</div>
<div class="t" style="left:1707px;top:1053px;font-size:19.5px;line-height:19.5px;color:#4a4a4a;">Standing Order</div>
<div class="r" style="left:1325px;top:1084px;width:554px;height:1px;background:#e5e5e5"></div>
<div class="t" style="left:1338px;top:1096px;font-size:19.5px;line-height:19.5px;color:#4a4a4a;">01/10/2022</div>
<div class="t" style="left:1500px;width:182px;text-align:right;top:1096px;font-size:19.5px;line-height:19.5px;color:#4a4a4a;transform:scaleX(0.925);transform-origin:100% 0">£30.00</div>
<div class="t" style="left:1707px;top:1096px;font-size:19.5px;line-height:19.5px;color:#4a4a4a;">Standing Order</div>
<div class="r" style="left:1325px;top:1126px;width:554px;height:1px;background:#e5e5e5"></div>
<div class="t" style="left:1338px;top:1138px;font-size:19.5px;line-height:19.5px;color:#4a4a4a;">01/11/2022</div>
<div class="t" style="left:1500px;width:182px;text-align:right;top:1138px;font-size:19.5px;line-height:19.5px;color:#4a4a4a;transform:scaleX(0.925);transform-origin:100% 0">£30.00</div>
<div class="t" style="left:1707px;top:1138px;font-size:19.5px;line-height:19.5px;color:#4a4a4a;">Standing Order</div>
<div class="r" style="left:1325px;top:1169px;width:554px;height:1px;background:#e5e5e5"></div>
<div class="r" style="left:1300px;top:1213px;width:608px;height:87px;box-sizing:border-box;border:1px solid #cccccc;border-radius:6px;background:#f3f3f3;box-shadow:0 3px 4px rgba(0,0,0,0.09)"></div>
<div class="r" style="left:1325px;top:1239px;width:36px;height:36px;background:#737e99;border-radius:5px"></div>
<svg class="r" style="left:1325px;top:1239px" width="36" height="36" viewBox="0 0 36 36"><circle cx="22.6" cy="13.6" r="6.7" fill="#fff"/><path d="M22.4 13.8L30.5 5.7" stroke="#737e99" stroke-width="4.2"/><path d="M20.5 15.7L9.7 26.5" stroke="#fff" stroke-width="5" stroke-linecap="round"/></svg>
<div class="t" style="left:1380px;top:1249px;font-size:23.5px;line-height:23.5px;color:#181818;font-weight:700;">GAU Allocations (0)</div>
<div class="r" style="left:1852px;top:1243px;width:30px;height:30px;box-sizing:border-box;border:1px solid #c9c9c9;border-radius:6px;background:#fff"></div>
<svg class="r" style="left:1860px;top:1255px" width="14" height="10" viewBox="0 0 14 10"><path d="M0.5 0.8h13L7 9.2z" fill="#747474"/></svg>
</body></html>
